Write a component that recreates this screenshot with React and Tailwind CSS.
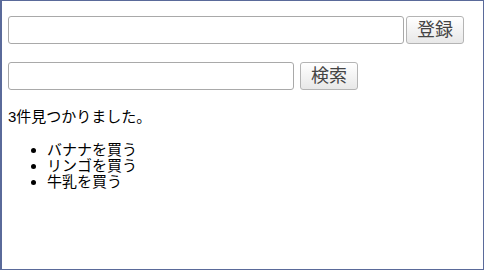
export default function App() {
  const font = { fontFamily: '"Liberation Sans", "Noto Sans CJK JP", sans-serif' };
  const btn =
    "h-[28px] w-[58px] rounded-[3px] border border-[#b4b4b4] bg-gradient-to-b from-white to-[#e8e8e8] text-[18px] leading-none text-[#444] flex items-center justify-center";
  return (
    <div
      style={font}
      className="w-[484px] h-[270px] border border-l-2 border-[#5a6a9a] bg-white pl-[6px] pt-[15px] text-black"
    >
      <div className="flex gap-[2px]">
        <input className="h-[28px] w-[396px] rounded-[3px] border border-[#a9a9a9] bg-white" />
        <button className={btn}>登録</button>
      </div>
      <div className="flex gap-[6px] mt-[18px]">
        <input className="h-[28px] w-[286px] rounded-[3px] border border-[#a9a9a9] bg-white" />
        <button className={btn}>検索</button>
      </div>
      <p className="mt-[18px] text-[15px] leading-[18px]">3件見つかりました。</p>
      <ul className="mt-[16px] pl-[39px] list-disc text-[15px] leading-[16px]">
        <li>バナナを買う</li>
        <li>リンゴを買う</li>
        <li>牛乳を買う</li>
      </ul>
    </div>
  );
}
